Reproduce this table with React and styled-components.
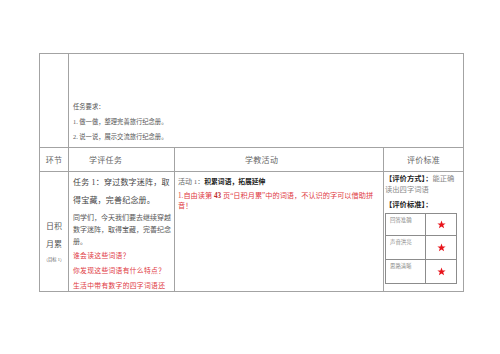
import React from "react"
import styled, { createGlobalStyle } from "styled-components"

const GlobalStyle = createGlobalStyle`
  html, body {
    margin: 0;
    padding: 0;
    background: #fff;
  }
  body {
    font-family: "Liberation Serif", "Noto Sans CJK SC", serif;
    color: #444;
  }
`

const rubric = ["回答准确", "声音洪亮", "思路清晰"]

const Star = () => (
  <svg width="9" height="9" viewBox="0 0 24 24">
    <polygon
      points="12,1.5 14.9,9 23,9.3 16.6,14.3 18.9,22.2 12,17.6 5.1,22.2 7.4,14.3 1,9.3 9.1,9"
      fill="#e8141b"
    />
  </svg>
)

const App = () => {
  return (
    <Page>
      <GlobalStyle />
      <Table>
        <Cell />
        <Cell span={3}>
          <Requirements>
            <p>任务要求：</p>
            <p>1. 做一做，整理完善旅行纪念册。</p>
            <p>2. 说一说，展示交流旅行纪念册。</p>
          </Requirements>
        </Cell>

        <HeadCell align="center">环节</HeadCell>
        <HeadCell indent={20}>学评任务</HeadCell>
        <HeadCell indent={70}>学教活动</HeadCell>
        <HeadCell align="center">评价标准</HeadCell>

        <Cell>
          <Stage>
            <span>日积</span>
            <span>月累</span>
            <small>（目标 1）</small>
          </Stage>
        </Cell>
        <Cell>
          <Task>
            <p className="title">任务 1：穿过数字迷阵，取得宝藏，完善纪念册。</p>
            <p className="intro">同学们，今天我们要去继续穿越数字迷阵，取得宝藏，完善纪念册。</p>
            <p className="ask">谁会读这些词语？</p>
            <p className="ask">你发现这些词语有什么特点？</p>
            <p className="ask">生活中带有数字的四字词语还有哪些？</p>
          </Task>
        </Cell>
        <Cell>
          <Activity>
            <p className="title">
              活动 1：<b>积累词语，拓展延伸</b>
            </p>
            <p className="step">
              1.自由读第 <b>43</b> 页“日积月累”中的词语，不认识的字可以借助拼音！
            </p>
          </Activity>
        </Cell>
        <Cell>
          <Criteria>
            <p>
              <b>【评价方式】：</b>能正确读出四字词语
            </p>
            <p className="label">
              <b>【评价标准】：</b>
            </p>
            <Rubric>
              {rubric.map((item, i) => (
                <React.Fragment key={item}>
                  <RubricName tall={i > 0}>{item}</RubricName>
                  <RubricStar tall={i > 0}>
                    <Star />
                  </RubricStar>
                </React.Fragment>
              ))}
            </Rubric>
          </Criteria>
        </Cell>
      </Table>
    </Page>
  )
}

const Page = styled.div`
  width: 500px;
  height: 354px;
  padding: 53px 0 0 39px;
  box-sizing: border-box;
  overflow: hidden;
`

const Table = styled.div`
  display: grid;
  grid-template-columns: 29px 106px 209px 80px;
  grid-template-rows: 94px 24px 120px;
  width: 425px;
  border-top: 1px solid #a3a3a3;
  border-left: 1px solid #a3a3a3;
  box-sizing: border-box;
`

const Cell = styled.div`
  grid-column: span ${(p) => p.span || 1};
  border-right: 1px solid #a3a3a3;
  border-bottom: 1px solid #a3a3a3;
  overflow: hidden;
  min-width: 0;
`

const HeadCell = styled(Cell)`
  display: flex;
  align-items: center;
  justify-content: ${(p) => (p.align === "center" ? "center" : "flex-start")};
  padding-left: ${(p) => p.indent || 0}px;
  font-size: 8px;
  color: #666;
  letter-spacing: 0.3px;
`

const Requirements = styled.div`
  height: 100%;
  display: flex;
  flex-direction: column;
  justify-content: flex-end;
  padding: 0 0 3px 4px;
  box-sizing: border-box;
  p {
    margin: 0;
    font-size: 6.3px;
    line-height: 15px;
    color: #555;
  }
`

const Stage = styled.div`
  display: flex;
  flex-direction: column;
  align-items: center;
  padding-top: 46px;
  color: #555;
  span {
    font-size: 8px;
    line-height: 18px;
  }
  small {
    font-size: 4.3px;
    line-height: 10px;
    margin-top: 1px;
  }
`

const Task = styled.div`
  height: 120px;
  padding: 2px 2px 0 4px;
  box-sizing: border-box;
  p {
    margin: 0;
  }
  .title {
    font-size: 8px;
    line-height: 17.5px;
    color: #444;
    letter-spacing: 0.2px;
  }
  .intro {
    margin-top: 3px;
    font-size: 7px;
    line-height: 12px;
    color: #555;
  }
  .ask {
    font-size: 6.8px;
    line-height: 15px;
    color: #e0393f;
    letter-spacing: 0.3px;
  }
`

const Activity = styled.div`
  padding: 4px 2px 0 3px;
  p {
    margin: 0;
  }
  .title {
    font-size: 7px;
    line-height: 12px;
    color: #666;
    b {
      color: #222;
      font-size: 6.8px;
    }
  }
  .step {
    margin-top: 3px;
    font-size: 7.2px;
    line-height: 10px;
    color: #e0393f;
    b {
      color: #c0282e;
    }
  }
`

const Criteria = styled.div`
  padding: 1px 3px 0 1px;
  font-size: 7.3px;
  line-height: 11px;
  color: #888;
  p {
    margin: 0;
  }
  b {
    color: #222;
  }
  .label {
    margin-top: 4px;
  }
`

const Rubric = styled.div`
  display: grid;
  grid-template-columns: 40px 31px;
  width: 72px;
  margin-top: 3px;
  border-top: 1px solid #8c8c8c;
  border-left: 1px solid #8c8c8c;
  box-sizing: border-box;
`

const RubricName = styled.div`
  height: ${(p) => (p.tall ? 24 : 22)}px;
  padding: 2px 0 0 4px;
  box-sizing: border-box;
  font-size: 5.4px;
  line-height: 8px;
  color: #888;
  border-right: 1px solid #8c8c8c;
  border-bottom: 1px solid #8c8c8c;
`

const RubricStar = styled.div`
  height: ${(p) => (p.tall ? 24 : 22)}px;
  display: flex;
  align-items: center;
  justify-content: center;
  box-sizing: border-box;
  border-right: 1px solid #8c8c8c;
  border-bottom: 1px solid #8c8c8c;
`

export default App
